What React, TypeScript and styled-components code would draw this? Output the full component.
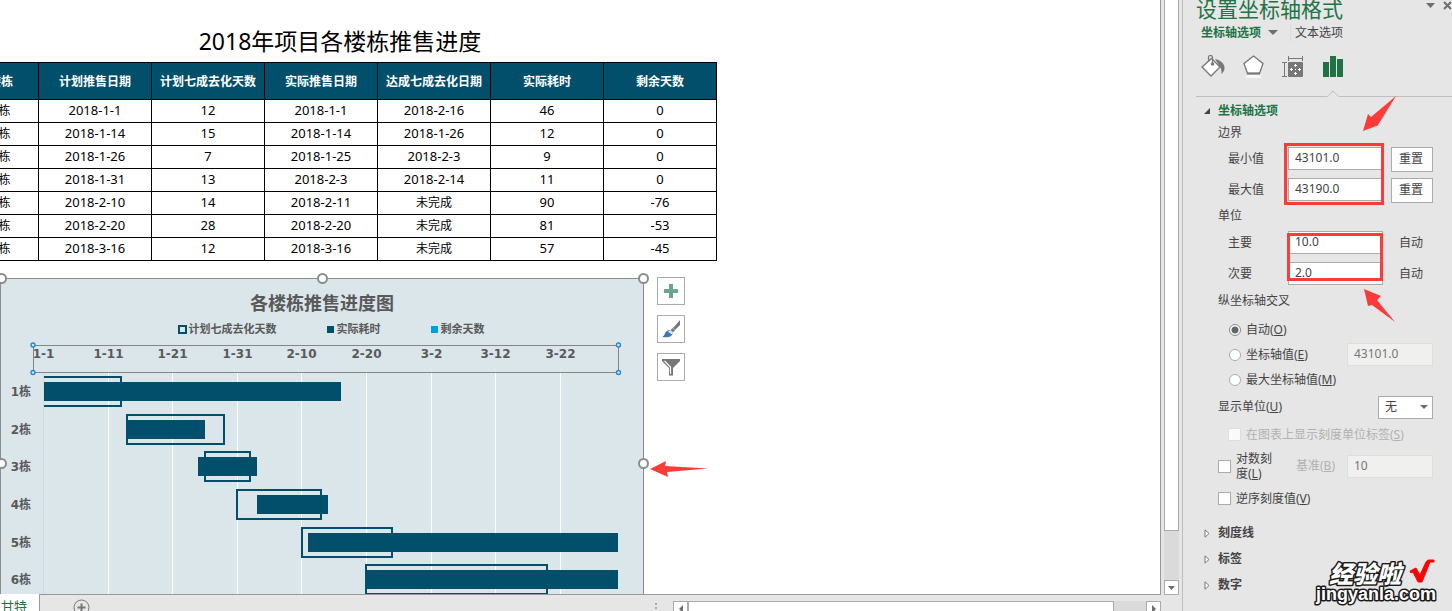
import React from "react";
import styled, { createGlobalStyle, css } from "styled-components";

const green = "#217346";
const navy = "#014f6b";
const ui = `"Noto Sans", "Noto Sans CJK SC", sans-serif`;

const GlobalStyle = createGlobalStyle`
  *, *::before, *::after { box-sizing: border-box; }
  html, body, #root { height: 100%; }
  body { margin: 0; overflow: hidden; background: #e6e6e6; font: 12px/18px ${ui}; color: #444; }
  button, input, select { font: inherit; color: inherit; margin: 0; border-radius: 0; }
  h1, h2, h3, p { margin: 0; font-weight: inherit; font-size: inherit; }
  svg { display: block; flex: none; }
`;

const Window = styled.div`display: flex; height: 100vh; overflow: hidden;`;
const Workbook = styled.main`flex: 1; min-width: 0; display: flex; flex-direction: column;`;
const SheetRow = styled.div`flex: 1; min-height: 0; display: flex; gap: 3px; padding-right: 3px;`;
const Sheet = styled.section`
  flex: 1; min-width: 0; overflow: hidden; background: #fff;
  border-right: 1px solid #999; border-bottom: 1px solid #999;
`;

/* worksheet table */
const TableBlock = styled.div`width: 754px; margin-left: -37px; color: #000;`;
const SheetTitle = styled.h1`
  height: 62px; padding-top: 20px; font-size: 23px; line-height: 42px; text-align: center;
`;
const Table = styled.table`
  width: 100%; table-layout: fixed; border-collapse: collapse; text-align: center;
  th, td { border: 1px solid #000; padding: 0; line-height: 18px; }
`;
const HeadCell = styled.th<{ $narrow?: boolean }>`
  width: ${p => (p.$narrow ? 75 : 113)}px; height: 37px; background: ${navy}; color: #fff; font-weight: 700;
  && { padding-top: 2px; }
`;
const Cell = styled.td<{ $number?: boolean }>`
  height: 23px; font-size: ${p => (p.$number ? 13 : 12)}px;
  && { padding-bottom: ${p => (p.$number ? 2 : 0)}px; }
`;

/* chart */
const ChartRow = styled.div`display: flex; align-items: flex-start; gap: 13px; margin-top: 16px;`;
const Chart = styled.figure`
  position: relative; width: 644px; height: 371px; margin: 1px 0 0; padding-top: 12px;
  background: #dbe6ea; border: 1px solid #8c8c8c; color: #595959;
`;
const ChartTitle = styled.h2`font-size: 18px; line-height: 24px; font-weight: 700; text-align: center;`;
const Legend = styled.div`
  display: flex; justify-content: center; gap: 50px; margin-top: 5px; padding-left: 18px;
  font-size: 11px; line-height: 18px; font-weight: 700;
`;
const LegendItem = styled.span`display: flex; align-items: center; gap: 2px;`;
const Swatch = styled.i<{ $fill?: string }>`
  width: 9px; height: 9px; border: 2px solid ${navy};
  ${p => p.$fill && css`width: 7px; height: 7px; margin-right: 1px; border: 0; background: ${p.$fill};`}
`;
const Handle = styled.i<{ $x: number; $y: number }>`
  position: absolute; left: ${p => p.$x}%; top: ${p => p.$y}%; width: 11px; height: 11px; margin: -6px -5px;
  border: 2px solid #8c8c8c; border-radius: 50%; background: #fff;
`;
const ChartTools = styled.div`position: relative; display: flex; flex-direction: column; gap: 10px;`;
const ToolButton = styled.button`
  width: 28px; height: 28px; padding: 0; display: grid; place-items: center;
  background: #fff; border: 1px solid #ababab;
`;

/* scroll bars and tab strip */
const VScroll = styled.div`
  width: 15px; display: flex; flex-direction: column; background: #dadada;
`;
const VThumb = styled.div`flex: 530 0 0; background: #fff; border: 1px solid #ababab; border-top: 0;`;
const VTrack = styled.div`flex: 49 0 0;`;
const ScrollButton = styled.button`
  flex: none; width: 15px; height: 15px; padding: 0; display: grid; place-items: center;
  background: #fff; border: 1px solid #ababab;
`;
const TabStrip = styled.div`
  flex: none; height: 16px; display: flex; align-items: flex-start; padding-right: 21px;
`;
const SheetTab = styled.button`
  width: 40px; height: 24px; margin-top: -1px; padding: 0 0 0 1px; text-align: left; line-height: 18px;
  background: #fff; border: 0; border-right: 1px solid #999; color: ${green}; font-size: 13px;
`;
const AddSheet = styled.button`margin: 4px 0 0 33px; padding: 0; border: 0; background: none;`;
const Grip = styled.i`
  width: 2px; height: 8px; margin: 8px 16px 0 auto;
  background: repeating-linear-gradient(#aaa 0 2px, transparent 2px 4px);
`;
const HScroll = styled.div`width: 488px; margin-top: 6px; display: flex; background: #dadada;`;
const HThumb = styled.div`flex: 1; margin-right: 32px; background: #fff; border: 1px solid #ababab;`;

/* format pane */
const Pane = styled.aside`
  position: relative; flex: none; width: 270px; overflow: hidden; border-left: 1px solid #bdbdbd; background: #e6e6e6;
`;
const PaneTop = styled.header`display: flex; height: 22px; padding-left: 13px; margin-right: -4px; color: ${green};`;
const PaneTitle = styled.h2`flex: 1; font-size: 21px; line-height: 18px; white-space: nowrap;`;
const PlainButton = styled.button`
  display: grid; place-items: center; height: 11px; width: 17px; padding: 0; border: 0; background: none;
`;
const PaneTabs = styled.nav`display: flex; align-items: center; height: 21px; padding-left: 18px;`;
const PaneTab = styled.button<{ $active?: boolean }>`
  display: flex; align-items: center; gap: 7px; padding: 0; border: 0; background: none; line-height: 18px;
  ${p => p.$active
    ? css`color: ${green}; font-weight: 700; padding-right: 12px; margin-right: 4px; border-right: 1px solid #dcdcdc;`
    : ""}
`;
const IconBar = styled.div`
  display: flex; height: 54px; margin-left: 13px; padding: 12px 0 0 5px; gap: 16px; border-bottom: 1px solid #bfbfbf;
`;
const IconTab = styled.button<{ $active?: boolean }>`
  position: relative; width: 24px; height: 24px; padding: 0; border: 0; background: none;
  ${p => p.$active && css`
    &::after {
      content: ""; position: absolute; left: 7px; bottom: -23px; width: 10px; height: 10px;
      border: solid #bfbfbf; border-width: 1px 0 0 1px; background: #e6e6e6; transform: rotate(45deg);
      clip-path: polygon(0 0, 100% 0, 0 100%);
    }`}
`;
const Section = styled.button<{ $open?: boolean }>`
  display: flex; align-items: center; gap: 8px; width: 100%; height: 26px; padding: 2px 0 0 21px;
  border: 0; background: none; font-weight: 700; ${p => p.$open && css`color: ${green};`}
`;
const Group = styled.h3<{ $h: number }>`height: ${p => p.$h}px; line-height: ${p => p.$h}px; padding-left: 35px;`;
const Row = styled.div<{ $h?: number; $in?: boolean }>`
  display: flex; align-items: center; height: ${p => p.$h ?? 31}px;
  padding: 0 19px 0 ${p => (p.$in ? 45 : 35)}px;
`;
const FieldLabel = styled.label`width: 60px;`;
const TextBox = styled.input<{ $w?: number }>`
  width: ${p => p.$w ?? 95}px; height: 23px; padding: 0 6px 2px; background: #fff; border: 1px solid #ababab;
  &:disabled { margin-left: auto; background: #f0f0ee; border-color: #dedede; color: #777; }
`;
const ResetButton = styled.button`
  width: 42px; height: 25px; margin: 2px 0 0 auto; padding: 0 2px 2px 0; background: #fdfdfd; border: 1px solid #ababab;
`;
const Auto = styled.span`margin-left: 16px;`;
const Radios = styled.div`padding-top: 4px;`;
const Option = styled.label<{ $dim?: boolean }>`
  display: flex; align-items: center; gap: 5px; line-height: 15px; white-space: nowrap;
  ${p => p.$dim && css`color: #b1b1b1;`}
`;
const Radio = styled.input`
  appearance: none; width: 12px; height: 12px; margin-left: 1px; border: 1px solid #ababab; border-radius: 50%; background: #fff;
  &:checked { background: radial-gradient(#666 0 3px, #fff 4px); border-color: #888; }
`;
const Check = styled.input`
  appearance: none; flex: none; width: 13px; height: 13px; border: 1px solid #ababab; background: #fff;
  &:disabled { border-color: #dedede; background: #fafafa; }
`;
const SelectWrap = styled.span`
  position: relative; margin-left: auto;
  svg { position: absolute; right: 5px; top: 9px; pointer-events: none; }
`;
const Select = styled.select`
  display: block; appearance: none; width: 55px; height: 23px; padding: 0 6px; background: #fff; border: 1px solid #ababab;
`;
const WrapText = styled.span`width: 42px; white-space: normal;`;
const BaseLabel = styled.label`margin-left: 18px; color: #b1b1b1;`;
const Sections = styled.div`padding-top: 8px;`;

/* annotations drawn over the page */
const RedBox = styled.i<{ $wide?: boolean }>`
  position: absolute; pointer-events: none; border: 3px solid #fd3b38;
  ${p => p.$wide
    ? css`left: 101px; top: 143px; width: 100px; height: 62px;`
    : css`left: 104px; top: 233px; width: 96px; height: 48px;`}
`;
const Arrow = styled.svg<{ $x: number; $y: number }>`
  position: absolute; left: ${p => p.$x}px; top: ${p => p.$y}px; fill: #fd3b38; pointer-events: none;
`;
const Watermark = styled.svg`
  position: absolute; right: 12px; top: 554px;
  text { fill: #fff; stroke: #1a1a1a; stroke-width: 3px; stroke-linejoin: round; paint-order: stroke; }
`;

const Caret = ({ w = 9, dir = "down" }: { w?: number; dir?: "down" | "left" | "right" }) => {
  const h = Math.ceil(w / 2);
  if (dir === "down") return <svg width={w} height={h}><path d={`M0 0H${w}L${w / 2} ${h}Z`} fill="#6e6e6e" /></svg>;
  return (
    <svg width={h} height={w}>
      <path d={dir === "left" ? `M${h} 0V${w}L0 ${w / 2}Z` : `M0 0V${w}L${h} ${w / 2}Z`} fill="#6e6e6e" />
    </svg>
  );
};

const headers = ["楼栋", "计划推售日期", "计划七成去化天数", "实际推售日期", "达成七成去化日期", "实际耗时", "剩余天数"];
const rows = [
  ["1栋", "2018-1-1", "12", "2018-1-1", "2018-2-16", "46", "0"],
  ["2栋", "2018-1-14", "15", "2018-1-14", "2018-1-26", "12", "0"],
  ["3栋", "2018-1-26", "7", "2018-1-25", "2018-2-3", "9", "0"],
  ["4栋", "2018-1-31", "13", "2018-2-3", "2018-2-14", "11", "0"],
  ["5栋", "2018-2-10", "14", "2018-2-11", "未完成", "90", "-76"],
  ["6栋", "2018-2-20", "28", "2018-2-20", "未完成", "81", "-53"],
  ["7栋", "2018-3-16", "12", "2018-3-16", "未完成", "57", "-45"],
];

/* day offsets counted from 2018-1-1 */
const bars = [
  { plan: [0, 12], real: [0, 46] },
  { plan: [13, 15], real: [13, 12] },
  { plan: [25, 7], real: [24, 9] },
  { plan: [30, 13], real: [33, 11] },
  { plan: [40, 14], real: [41, 90] },
  { plan: [50, 28], real: [50, 81] },
  { plan: [74, 12], real: [74, 57] },
];
const ticks = ["1-1", "1-11", "1-21", "1-31", "2-10", "2-20", "3-2", "3-12", "3-22"];
const tickX = (i: number) => Math.round(43 + i * 64.6);
const dayX = (d: number) => Math.max(43, Math.round(42.4 + Math.min(d, 89) * 6.46));
const rowY = (i: number) => Math.round(37.8 + i * 37.7);

const Plot = () => (
  <svg width="642" height="308" fontFamily='"DejaVu Sans", "Noto Sans CJK SC", sans-serif' fontSize="12" fontWeight="700" fill="#595959">
    {ticks.map((t, i) => (
      <g key={t}>
        <path d={`M${tickX(i) - 0.5} 35V308`} stroke={i ? "#fff" : "#d4d9db"} />
        <text x={tickX(i) - 0.5} y="20" textAnchor="middle">{t}</text>
      </g>
    ))}
    <rect x="32.5" y="7.5" width="585" height="27" stroke="#858585" fill="none" />
    {[[32, 7], [617.5, 7], [32, 34.5], [617.5, 34.5]].map(([x, y]) => (
      <circle key={`${x}-${y}`} cx={x} cy={y} r="2" fill="#dbe6ea" stroke="#2488d8" strokeWidth="1.4" />
    ))}
    {bars.map(({ plan, real }, i) => {
      const y = rowY(i);
      const x0 = dayX(plan[0]);
      const x1 = dayX(plan[0] + plan[1]);
      return (
        <g key={i}>
          <path
            d={`M${x0} ${y + 1}H${x1}V${y + 30}H${x0}${i === 0 ? "" : "Z"}`}
            fill="none" stroke={navy} strokeWidth="2"
          />
          <rect x={dayX(real[0])} y={y + 6} width={dayX(real[0] + real[1]) - dayX(real[0])} height="19" fill={navy} />
          <text x="30" y={y + 20} textAnchor="end">{i + 1}栋</text>
        </g>
      );
    })}
  </svg>
);

const handles = [[0, 0], [50, 0], [100, 0], [0, 50], [100, 50]];

export default function App() {
  return (
    <>
      <GlobalStyle />
      <Window>
        <Workbook>
          <SheetRow>
            <Sheet>
              <TableBlock>
                <SheetTitle>2018年项目各楼栋推售进度</SheetTitle>
                <Table>
                  <thead>
                    <tr>{headers.map((h, i) => <HeadCell key={h} $narrow={i === 0}>{h}</HeadCell>)}</tr>
                  </thead>
                  <tbody>
                    {rows.map(r => (
                      <tr key={r[0]}>
                        {r.map((v, i) => <Cell key={i} $number={/^[-\d]+$/.test(v)}>{v}</Cell>)}
                      </tr>
                    ))}
                  </tbody>
                </Table>
              </TableBlock>
              <ChartRow>
                <Chart>
                  <ChartTitle>各楼栋推售进度图</ChartTitle>
                  <Legend>
                    <LegendItem><Swatch />计划七成去化天数</LegendItem>
                    <LegendItem><Swatch $fill={navy} />实际耗时</LegendItem>
                    <LegendItem><Swatch $fill="#009fe3" />剩余天数</LegendItem>
                  </Legend>
                  <Plot />
                  {handles.map(([x, y]) => <Handle key={`${x}-${y}`} $x={x} $y={y} />)}
                </Chart>
                <ChartTools>
                  <ToolButton aria-label="图表元素">
                    <svg width="14" height="14"><path d="M5 0h4v5h5v4H9v5H5V9H0V5h5z" fill="#66a78e" /></svg>
                  </ToolButton>
                  <ToolButton aria-label="图表样式">
                    <svg width="18" height="18" viewBox="0 0 18 18">
                      <path d="M18 0v5l-5 5-2-2z" fill="#777" />
                      <path d="M10.500 8l2.500 2.500-2 1.800-2.400-2.400z" fill="#777" />
                      <path d="M0 17c3-1 2.500-5 5.500-6.500 2-1 5 .5 5 3C10 17 5 18 0 17z" fill="#3f77b5" />
                      <path d="M6.500 11.500c2 0 3 1 3 2.500" fill="none" stroke="#fff" strokeWidth="1.300" />
                    </svg>
                  </ToolButton>
                  <ToolButton aria-label="图表筛选器">
                    <svg width="18" height="17" viewBox="0 0 18 17">
                      <path d="M0 0h18v2l-7 7v7.500H7V9L0 2z" fill="#777" />
                      <path d="M2.500 1.800l6 6.200v7" fill="none" stroke="#fff" strokeWidth="1.200" />
                    </svg>
                  </ToolButton>
                  <Arrow $x={-7} $y={184} width="58" height="16"><path d="M0 8L16 0 15 5 58 7.500 17 11 18 16Z" /></Arrow>
                </ChartTools>
              </ChartRow>
            </Sheet>
            <VScroll>
              <VThumb />
              <VTrack />
              <ScrollButton aria-label="向下滚动"><Caret w={7} /></ScrollButton>
            </VScroll>
          </SheetRow>
          <TabStrip>
            <SheetTab>甘特</SheetTab>
            <AddSheet aria-label="新工作表">
              <svg width="17" height="17" fill="none" stroke="#777">
                <circle cx="8.500" cy="8.500" r="7.500" /><path d="M8.500 4.500v8M4.500 8.500h8" strokeWidth="2" />
              </svg>
            </AddSheet>
            <Grip />
            <HScroll>
              <ScrollButton aria-label="向左滚动"><Caret w={8} dir="left" /></ScrollButton>
              <HThumb />
              <ScrollButton aria-label="向右滚动"><Caret w={8} dir="right" /></ScrollButton>
            </HScroll>
          </TabStrip>
        </Workbook>

        <Pane>
          <PaneTop>
            <PaneTitle>设置坐标轴格式</PaneTitle>
            <PlainButton aria-label="窗格选项"><Caret w={9} /></PlainButton>
            <PlainButton aria-label="关闭">
              <svg width="9" height="9"><path d="M1 1l7 7M8 1L1 8" stroke="#6e6e6e" strokeWidth="2" /></svg>
            </PlainButton>
          </PaneTop>
          <PaneTabs>
            <PaneTab $active>坐标轴选项<Caret w={10} /></PaneTab>
            <PaneTab>文本选项</PaneTab>
          </PaneTabs>
          <IconBar>
            <IconTab aria-label="填充与线条">
              <svg width="24" height="24" viewBox="0 0 24 24">
                <path d="M14 4c5 1 9 4 9.500 8 .3 3-1 5-3 7 .2-4-.5-6-1.500-7z" fill="#777" />
                <path d="M10.500 3.500L19 12l-9 9L1 12z" fill="#fff" stroke="#777" strokeWidth="1.300" />
                <path d="M7.500 7V2.500q0-2 2-2t2 2V9" fill="none" stroke="#777" strokeWidth="1.200" />
                <circle cx="11.500" cy="9" r="1.800" fill="#777" />
              </svg>
            </IconTab>
            <IconTab aria-label="效果">
              <svg width="24" height="24" viewBox="0 0 24 24">
                <path d="M6 19h13l1 4H5z" fill="#f7f7f7" />
                <path d="M12.500 1l9.500 7.500-3.500 10H6.500L3 8.500z" fill="#fff" stroke="#777" strokeWidth="1.300" />
                <path d="M6 18.500h13" stroke="#777" strokeWidth="2" />
              </svg>
            </IconTab>
            <IconTab aria-label="大小与属性">
              <svg width="24" height="24" viewBox="0 0 24 24" fill="none" stroke="#777">
                <path d="M7 3.500h14M7.500 1v5M21.500 1v5M3.500 8v13M1 7.500h5M1 21.500h5" />
                <rect x="7" y="7" width="15" height="15" rx="1" fill="#777" stroke="none" />
                <path d="M14.500 9v3M14.500 17v3M9 14.500h3M17 14.500h3M13 10.500h3M13 18.500h3M10.500 13v3M18.500 13v3M14 14.500h1" stroke="#fff" />
              </svg>
            </IconTab>
            <IconTab $active aria-label="坐标轴选项">
              <svg width="24" height="24" fill={green}>
                <path d="M2 7h6v15H2zM9 1h6v21H9zM16 4h6v18h-6z" />
              </svg>
            </IconTab>
          </IconBar>

          <Section $open>
            <svg width="6" height="6"><path d="M6 0V6H0Z" fill="#444" /></svg>坐标轴选项
          </Section>
          <Group $h={20}>边界</Group>
          <Row $in><FieldLabel htmlFor="min">最小值</FieldLabel><TextBox id="min" defaultValue="43101.0" /><ResetButton>重置</ResetButton></Row>
          <Row $in><FieldLabel htmlFor="max">最大值</FieldLabel><TextBox id="max" defaultValue="43190.0" /><ResetButton>重置</ResetButton></Row>
          <Group $h={22}>单位</Group>
          <Row $in><FieldLabel htmlFor="major">主要</FieldLabel><TextBox id="major" defaultValue="10.0" /><Auto>自动</Auto></Row>
          <Row $in><FieldLabel htmlFor="minor">次要</FieldLabel><TextBox id="minor" defaultValue="2.0" /><Auto>自动</Auto></Row>
          <Group $h={24}>纵坐标轴交叉</Group>
          <Radios>
            <Row $in $h={25}><Option><Radio type="radio" name="cross" defaultChecked /><span>自动(<u>O</u>)</span></Option></Row>
            <Row $in $h={25}>
              <Option><Radio type="radio" name="cross" /><span>坐标轴值(<u>E</u>)</span></Option>
              <TextBox $w={86} aria-label="坐标轴值" disabled defaultValue="43101.0" />
            </Row>
            <Row $in $h={25}><Option><Radio type="radio" name="cross" /><span>最大坐标轴值(<u>M</u>)</span></Option></Row>
          </Radios>
          <Row $h={30}>
            <label htmlFor="unit">显示单位(<u>U</u>)</label>
            <SelectWrap><Select id="unit"><option>无</option></Select><Caret w={8} /></SelectWrap>
          </Row>
          <Row $in $h={24}><Option $dim><Check type="checkbox" disabled /><span>在图表上显示刻度单位标签(<u>S</u>)</span></Option></Row>
          <Row $h={40}>
            <Option><Check type="checkbox" /><WrapText>对数刻度(<u>L</u>)</WrapText></Option>
            <BaseLabel htmlFor="base">基准(<u>B</u>)</BaseLabel>
            <TextBox id="base" $w={86} disabled defaultValue="10" />
          </Row>
          <Row $h={25}><Option><Check type="checkbox" /><span>逆序刻度值(<u>V</u>)</span></Option></Row>
          <Sections>
            {["刻度线", "标签", "数字"].map(s => (
              <Section key={s}>
                <svg width="6" height="9"><path d="M1 .8V8.200L5 4.500Z" fill="#fff" stroke="#777" /></svg>{s}
              </Section>
            ))}
          </Sections>

          <RedBox $wide />
          <RedBox />
          <Arrow $x={180} $y={96} width="33" height="35"><path d="M33 0L15 29 16 29 0 35 5 18 8 21Z" /></Arrow>
          <Arrow $x={181} $y={289} width="32" height="33"><path d="M0 0L17 7 13 11 31 33 8 16 4 17Z" /></Arrow>
          <Watermark width="128" height="54" fontFamily='"Noto Sans CJK SC", sans-serif' fontWeight="900">
            <text x="17" y="29" fontSize="24" fontStyle="italic">经验啦</text>
            <text x="4" y="46" fontSize="18" fontFamily='"Liberation Sans", sans-serif' fontWeight="700">jingyanla.com</text>
            <path d="M98 17l6-3 4 7L114 8q1-2 3-2h5v2h-4l-8 20h-4l-5-10-2 1z" fill="#f00" stroke="#f00" />
          </Watermark>
        </Pane>
      </Window>
    </>
  );
}
